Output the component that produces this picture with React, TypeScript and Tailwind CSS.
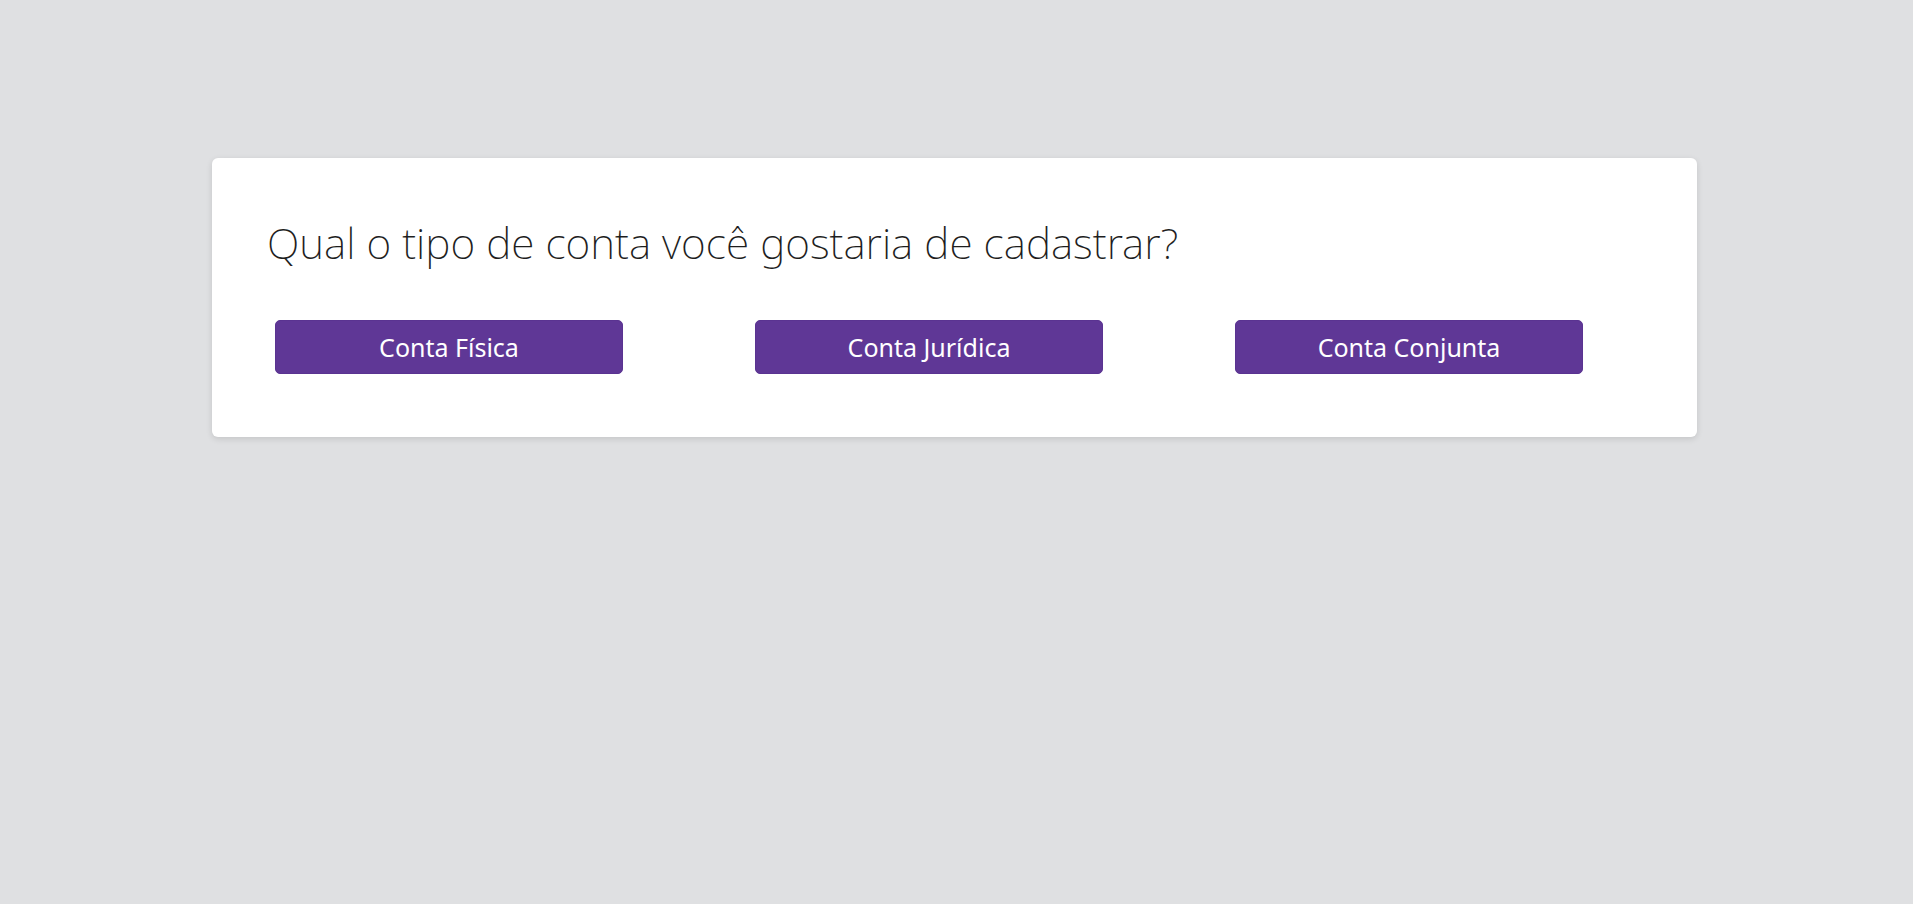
export default function App() {
  const options = ['Conta Física', 'Conta Jurídica', 'Conta Conjunta'];

  return (
    <div className="min-h-[904px] w-full bg-[#dfe0e2] pt-[158px] font-['Noto_Sans','Open_Sans',sans-serif]">
      <div className="ml-[212px] w-[1485px] h-[279px] rounded-md bg-white shadow-[0_2px_6px_rgba(0,0,0,0.12)] pl-[55px] pt-[58px]">
        <h1 className="text-[42.5px] leading-[54px] font-extralight text-[#1e1e1e] tracking-normal">
          Qual o tipo de conta você gostaria de cadastrar?
        </h1>

        <div className="mt-[50px] ml-[8px] flex gap-[132px]">
          {options.map((label) => (
            <button
              key={label}
              className="w-[348px] h-[54px] rounded-[5px] bg-[#5f3796] border border-[#5a3391] text-white text-[25px] leading-none"
            >
              {label}
            </button>
          ))}
        </div>
      </div>
    </div>
  );
}
